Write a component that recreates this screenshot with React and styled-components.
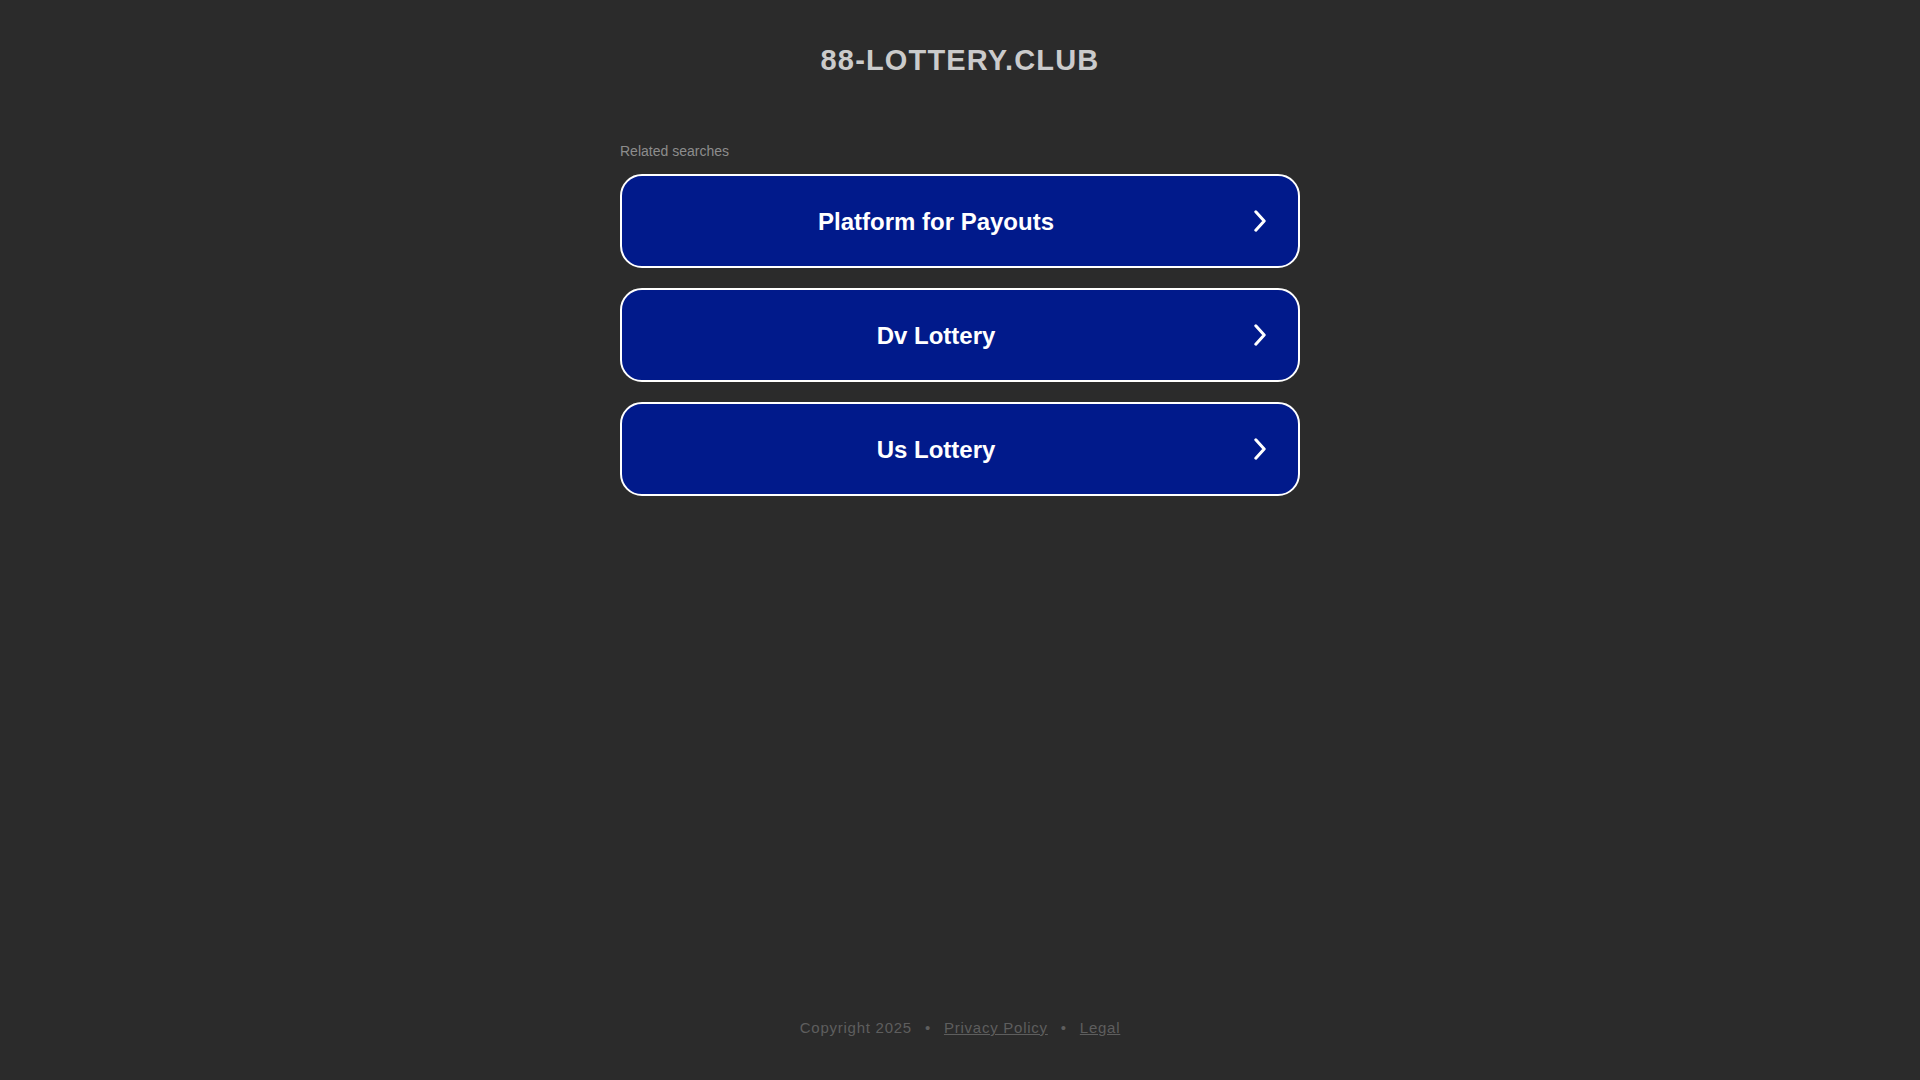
import React from 'react'
import styled, { createGlobalStyle } from 'styled-components'

const GlobalStyle = createGlobalStyle`
  html, body {
    margin: 0;
    padding: 0;
    background-color: #2b2b2b;
  }
  body {
    font-family: "Liberation Sans", Arial, sans-serif;
  }
`

const Page = styled.div`
  min-height: 100vh;
  display: flex;
  flex-direction: column;
  align-items: center;
  box-sizing: border-box;
  padding: 44px 0 44px;
`

const Title = styled.h1`
  margin: 0;
  font-size: 29px;
  font-weight: 700;
  letter-spacing: 1.15px;
  color: #cbcbcb;
  text-align: center;
`

const Main = styled.div`
  width: 680px;
  margin-top: 66px;
  flex: 1;
`

const Caption = styled.div`
  font-size: 14px;
  color: #8d8d8d;
  margin: 0 0 15px 0;
`

const List = styled.div`
  display: flex;
  flex-direction: column;
  gap: 20px;
`

const Item = styled.a`
  display: flex;
  align-items: center;
  box-sizing: border-box;
  height: 94px;
  padding: 0 32px 0 1px;
  background-color: #011a8b;
  border: 2px solid #ffffff;
  border-radius: 22px;
  color: #ffffff;
  text-decoration: none;
  cursor: pointer;
`

const Label = styled.span`
  flex: 1;
  padding-top: 2px;
  text-align: center;
  font-size: 24px;
  font-weight: 700;
`

const Arrow = styled.svg`
  width: 12px;
  height: 22px;
  margin-left: 5px;
  flex-shrink: 0;
`

const Footer = styled.footer`
  display: flex;
  align-items: center;
  gap: 13px;
  font-size: 15px;
  letter-spacing: 0.75px;
  color: #5e5e5e;
`

const FooterLink = styled.a`
  color: #5e5e5e;
  text-decoration: underline;
`

const items = ['Platform for Payouts', 'Dv Lottery', 'Us Lottery']

function Chevron() {
  return (
    <Arrow viewBox="0 0 12 22">
      <polyline
        points="1.8,1.8 10.2,11 1.8,20.2"
        fill="none"
        stroke="#ffffff"
        strokeWidth="3"
        strokeLinecap="round"
        strokeLinejoin="round"
      />
    </Arrow>
  )
}

export default function App() {
  return (
    <>
      <GlobalStyle />
      <Page>
        <Title>88-LOTTERY.CLUB</Title>
        <Main>
          <Caption>Related searches</Caption>
          <List>
            {items.map((item) => (
              <Item key={item}>
                <Label>{item}</Label>
                <Chevron />
              </Item>
            ))}
          </List>
        </Main>
        <Footer>
          <span>Copyright 2025</span>
          <span>•</span>
          <FooterLink>Privacy Policy</FooterLink>
          <span>•</span>
          <FooterLink>Legal</FooterLink>
        </Footer>
      </Page>
    </>
  )
}
